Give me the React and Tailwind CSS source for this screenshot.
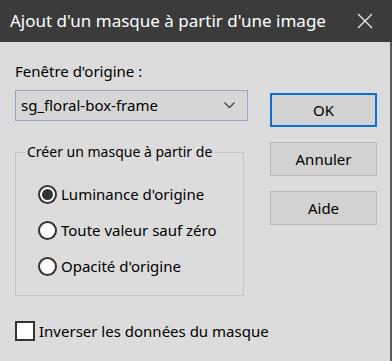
import React from "react";

const font = { fontFamily: '"Noto Sans", "Open Sans", sans-serif' };

const Radio = ({ checked, label }) => (
  <div className="flex items-center h-[20px] whitespace-nowrap">
    <span className="w-[19px] h-[19px] rounded-full border-[2px] border-[#333] bg-white flex items-center justify-center">
      {checked && <span className="w-[11px] h-[11px] rounded-full bg-[#333]" />}
    </span>
    <span className="ml-[4px] text-[15px] text-black leading-none">{label}</span>
  </div>
);

const Button = ({ children, primary }) => (
  <div
    className={`h-[34px] flex items-center justify-center text-[15px] text-black bg-[#d2d2d2] ${
      primary ? "border-[2px] border-[#0a6ed8]" : "border border-[#b8b8b8]"
    }`}
  >
    {children}
  </div>
);

export default function App() {
  return (
    <div className="w-[392px] h-[361px] bg-[#dcdcdc] flex flex-col overflow-hidden" style={font}>
      <div className="h-[42px] bg-[#3b3b3b] flex items-center justify-between pl-[10px] pr-[19px] shrink-0">
        <span className="text-[17px] text-white whitespace-nowrap">Ajout d'un masque à partir d'une image</span>
        <svg width="16" height="16" viewBox="0 0 16 16">
          <path d="M1 1L15 15M15 1L1 15" stroke="#e8e8e8" strokeWidth="1.4" />
        </svg>
      </div>
      <div className="flex-1 flex border-r-[2px] border-[#5a5a5a]">
        <div className="w-[233px] ml-[15px] flex flex-col">
          <div className="mt-[22px] text-[15px] leading-none text-black whitespace-nowrap">Fenêtre d'origine :</div>
          <div className="mt-[11px] h-[31px] border border-[#9aa6c0] bg-[#d6d6d6] flex items-center justify-between pl-[5px] pr-[12px]">
            <span className="text-[15px] text-black">sg_floral-box-frame</span>
            <svg width="11" height="7" viewBox="0 0 11 7">
              <path d="M0.5 0.5L5.5 5.5L10.5 0.5" stroke="#444" strokeWidth="1.3" fill="none" />
            </svg>
          </div>
          <fieldset className="mt-[24px] min-w-0 border border-[#c4c4c4] h-[151px] w-[229px] px-[22px] pt-[25px] flex flex-col gap-[16px]">
            <legend className="px-[2px] -ml-[13px] text-[14px] text-black leading-none whitespace-nowrap">
              Créer un masque à partir de
            </legend>
            <Radio checked label="Luminance d'origine" />
            <Radio label="Toute valeur sauf zéro" />
            <Radio label="Opacité d'origine" />
          </fieldset>
          <div className="mt-[25px] flex items-center whitespace-nowrap">
            <span className="w-[20px] h-[20px] border-[2px] border-[#333] bg-white shrink-0" />
            <span className="ml-[4px] text-[15px] text-black leading-none">Inverser les données du masque</span>
          </div>
        </div>
        <div className="ml-[22px] w-[107px] mt-[51px] flex flex-col gap-[15px]">
          <Button primary>OK</Button>
          <Button>Annuler</Button>
          <Button>Aide</Button>
        </div>
      </div>
    </div>
  );
}
